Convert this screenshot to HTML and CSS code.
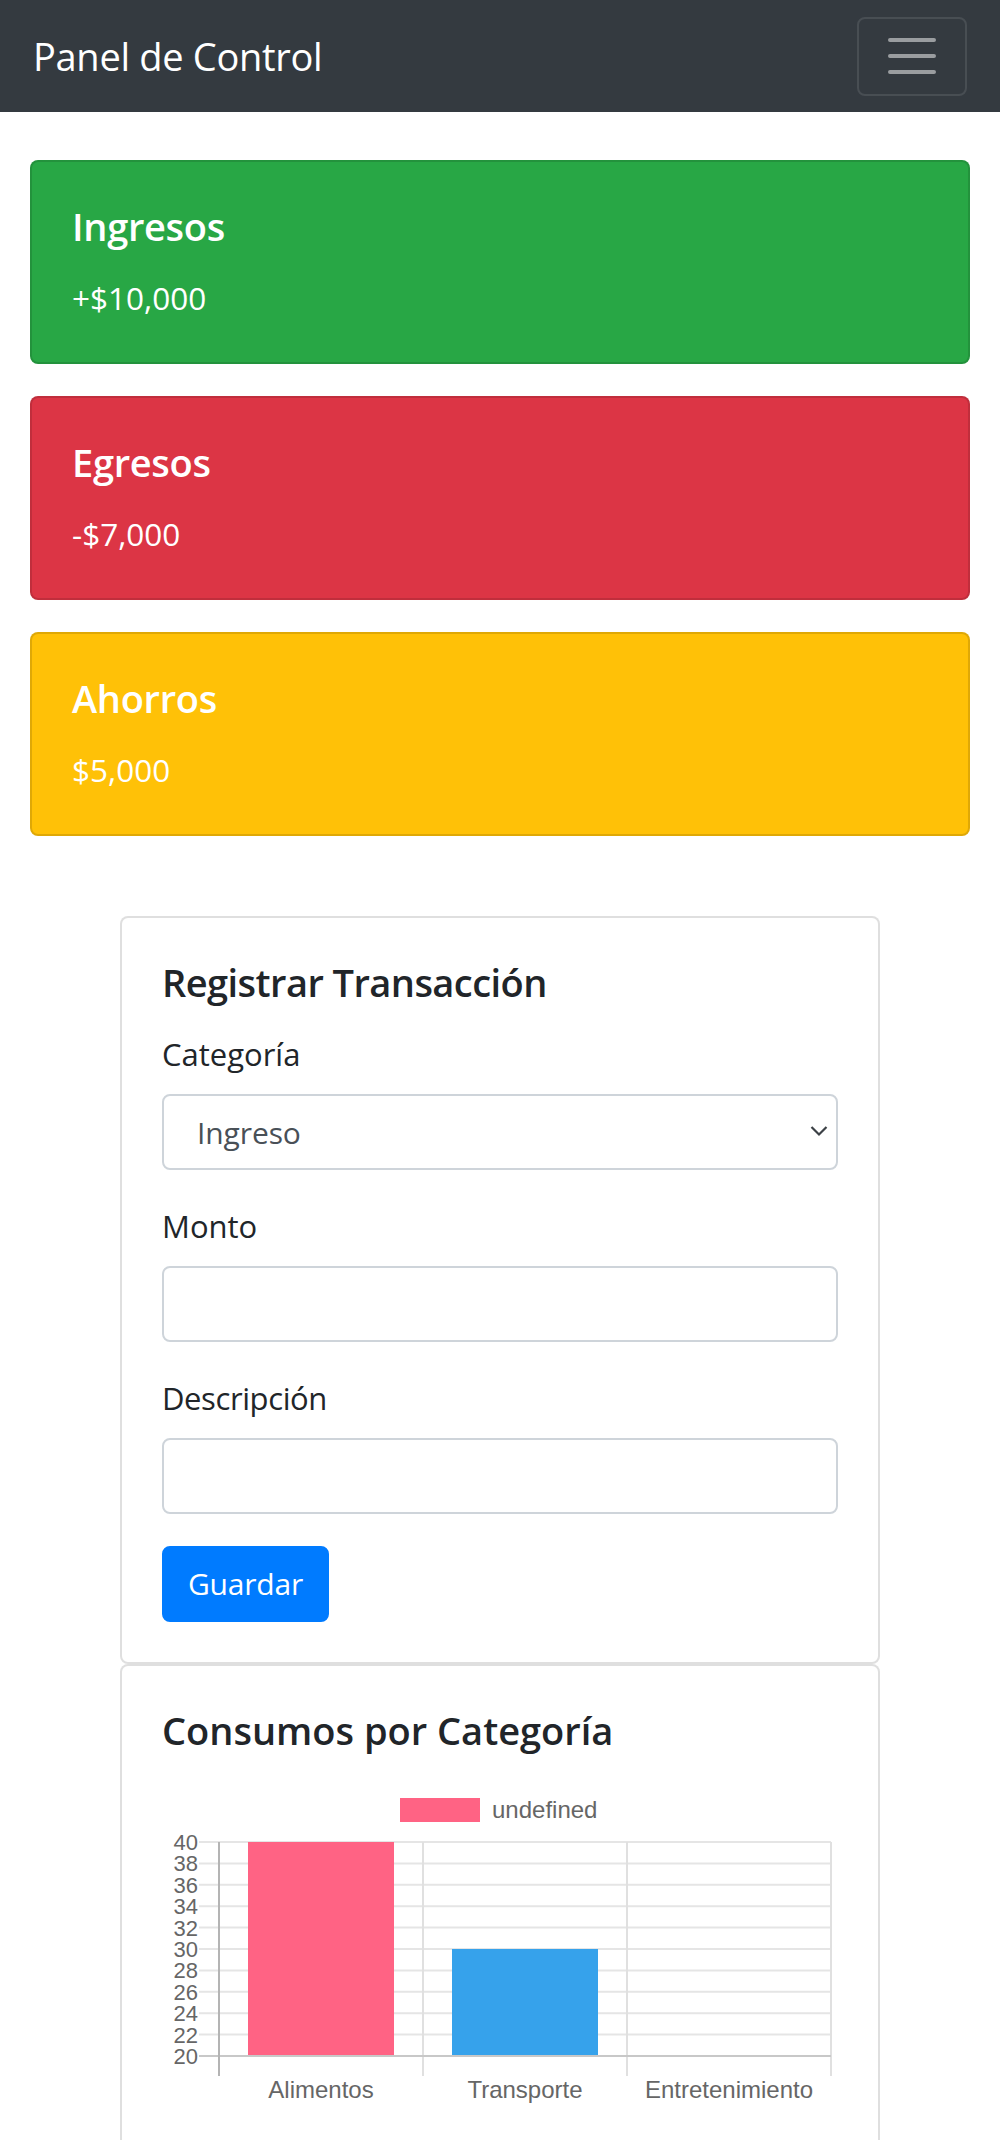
FILE: index.html
```html
<!DOCTYPE html>
<html lang="es">
<head>
<meta charset="utf-8">
<title>Panel de Control</title>
<link rel="stylesheet" href="styles.css">
</head>
<body>
<nav class="navbar">
  <span class="brand">Panel de Control</span>
  <button class="toggler" type="button" aria-label="Menú">
    <svg width="60" height="60" viewBox="0 0 30 30" aria-hidden="true">
      <path d="M4 7h22M4 15h22M4 23h22" stroke="rgba(255,255,255,0.5)" stroke-width="2" stroke-linecap="round" fill="none"/>
    </svg>
  </button>
</nav>

<main class="container">
  <div class="stat-card stat-success">
    <h5 class="stat-title">Ingresos</h5>
    <p class="stat-text">+$10,000</p>
  </div>
  <div class="stat-card stat-danger">
    <h5 class="stat-title">Egresos</h5>
    <p class="stat-text">-$7,000</p>
  </div>
  <div class="stat-card stat-warning">
    <h5 class="stat-title">Ahorros</h5>
    <p class="stat-text">$5,000</p>
  </div>

  <section class="panel panel-first">
    <h5 class="panel-title">Registrar Transacción</h5>
    <div class="form-group">
      <label class="form-label" for="cat">Categoría</label>
      <div class="select-wrap">
        <select id="cat" class="form-control form-select">
          <option>Ingreso</option>
          <option>Egreso</option>
        </select>
        <svg class="chevron" width="18" height="12" viewBox="0 0 18 12" aria-hidden="true">
          <path d="M1.5 2l7.5 7.5L16.5 2" stroke="#3c4146" stroke-width="2.2" fill="none"/>
        </svg>
      </div>
    </div>
    <div class="form-group">
      <label class="form-label" for="monto">Monto</label>
      <input id="monto" class="form-control" type="text">
    </div>
    <div class="form-group">
      <label class="form-label label-tight" for="desc">Descripción</label>
      <input id="desc" class="form-control" type="text">
    </div>
    <button class="btn-primary" type="button">Guardar</button>
  </section>

  <section class="panel">
    <h5 class="panel-title panel-title-wide">Consumos por Categoría</h5>
    <svg class="chart" width="676" height="360" viewBox="0 0 676 360">
      <!-- legend -->
      <rect x="238" y="20" width="80" height="24" fill="#ff6384"/>
      <text x="330" y="40" class="legend-text">undefined</text>

      <!-- horizontal grid lines + ticks -->
      <g stroke="#e5e5e5" stroke-width="2">
        <line x1="37" y1="64" x2="669" y2="64"/>
        <line x1="37" y1="85.4" x2="669" y2="85.4"/>
        <line x1="37" y1="106.8" x2="669" y2="106.8"/>
        <line x1="37" y1="128.2" x2="669" y2="128.2"/>
        <line x1="37" y1="149.6" x2="669" y2="149.6"/>
        <line x1="37" y1="171" x2="669" y2="171"/>
        <line x1="37" y1="192.4" x2="669" y2="192.4"/>
        <line x1="37" y1="213.8" x2="669" y2="213.8"/>
        <line x1="37" y1="235.2" x2="669" y2="235.2"/>
        <line x1="37" y1="256.6" x2="669" y2="256.6"/>
      </g>
      <!-- vertical grid lines -->
      <g stroke="#e0e0e0" stroke-width="2">
        <line x1="261" y1="64" x2="261" y2="298"/>
        <line x1="465" y1="64" x2="465" y2="298"/>
        <line x1="669" y1="64" x2="669" y2="298"/>
      </g>

      <!-- bars -->
      <rect x="86" y="64" width="146" height="214" fill="#ff6384"/>
      <rect x="290" y="171" width="146" height="107" fill="#36a2eb"/>

      <!-- axes -->
      <line x1="37" y1="278" x2="669" y2="278" stroke="#c8c8c8" stroke-width="2"/>
      <line x1="57" y1="64" x2="57" y2="298" stroke="#b4b4b4" stroke-width="2"/>

      <!-- y labels -->
      <g class="ytick" text-anchor="end">
        <text x="36" y="72">40</text>
        <text x="36" y="93.4">38</text>
        <text x="36" y="114.8">36</text>
        <text x="36" y="136.2">34</text>
        <text x="36" y="157.6">32</text>
        <text x="36" y="179">30</text>
        <text x="36" y="200.4">28</text>
        <text x="36" y="221.8">26</text>
        <text x="36" y="243.2">24</text>
        <text x="36" y="264.6">22</text>
        <text x="36" y="286">20</text>
      </g>

      <!-- x labels -->
      <g class="xtick" text-anchor="middle">
        <text x="159" y="320">Alimentos</text>
        <text x="363" y="320">Transporte</text>
        <text x="567" y="320">Entretenimiento</text>
      </g>
    </svg>
  </section>
</main>
</body>
</html>
```

FILE: styles.css
```css
* {
  box-sizing: border-box;
}

body {
  margin: 0;
  font-family: "Open Sans", "Noto Sans", "DejaVu Sans", sans-serif;
  font-size: 32px;
  line-height: 1.5;
  color: #212529;
  background: #fff;
}

.navbar {
  display: flex;
  align-items: center;
  justify-content: space-between;
  height: 112px;
  padding: 16px 33px 16px 33px;
  background: #343a40;
}

.brand {
  color: #fff;
  font-size: 38px;
  line-height: 60px;
  padding: 10px 0;
  letter-spacing: -0.3px;
}

.toggler {
  display: flex;
  align-items: center;
  justify-content: center;
  width: 110px;
  height: 79px;
  padding: 0;
  background: transparent;
  border: 2px solid rgba(255, 255, 255, 0.1);
  border-radius: 8px;
}

.toggler svg {
  display: block;
}

.container {
  padding: 48px 30px 0;
}

.stat-card {
  border: 2px solid rgba(0, 0, 0, 0.125);
  border-radius: 8px;
  padding: 40px;
  margin-bottom: 32px;
  color: #fff;
}

.stat-success { background: #28a745; }
.stat-danger  { background: #dc3545; }
.stat-warning { background: #ffc107; }

.stat-title {
  margin: 0 0 24px;
  font-size: 38px;
  font-weight: 600;
  line-height: 48px;
  letter-spacing: -0.3px;
}

.stat-text {
  margin: 0;
  font-size: 31.5px;
  line-height: 48px;
}

.panel {
  width: 760px;
  margin: 0 auto;
  padding: 40px;
  border: 2px solid rgba(0, 0, 0, 0.125);
  border-radius: 8px;
  background: #fff;
}

.panel-first {
  margin-top: 80px;
}

.panel-title {
  margin: 0 0 24px;
  font-size: 38px;
  font-weight: 600;
  line-height: 48px;
  letter-spacing: -0.55px;
  color: #212529;
}

.panel-title-wide {
  letter-spacing: 0;
}

.form-group {
  margin-bottom: 32px;
}

.form-label {
  display: block;
  margin-bottom: 16px;
  font-size: 31px;
  line-height: 48px;
}

.label-tight {
  letter-spacing: -0.4px;
}

.form-control {
  display: block;
  width: 100%;
  height: 76px;
  padding: 12px 24px;
  font-family: inherit;
  font-size: 30px;
  color: #495057;
  background: #fff;
  border: 2px solid #ced4da;
  border-radius: 8px;
  outline: none;
}

.select-wrap {
  position: relative;
}

.form-select {
  appearance: none;
  -webkit-appearance: none;
  padding-left: 33px;
  letter-spacing: -0.1px;
}

.chevron {
  position: absolute;
  right: 10px;
  top: 31px;
  pointer-events: none;
}

.btn-primary {
  display: inline-block;
  height: 76px;
  padding: 12px 24px;
  font-family: inherit;
  font-size: 30px;
  line-height: 48px;
  letter-spacing: -0.2px;
  color: #fff;
  background: #007bff;
  border: 2px solid #007bff;
  border-radius: 8px;
}

.chart {
  display: block;
  font-family: "Liberation Sans", Arial, sans-serif;
}

.legend-text {
  font-size: 24px;
  fill: #666;
}

.ytick text {
  font-size: 22px;
  fill: #666;
}

.xtick text {
  font-size: 24px;
  fill: #666;
}
```
